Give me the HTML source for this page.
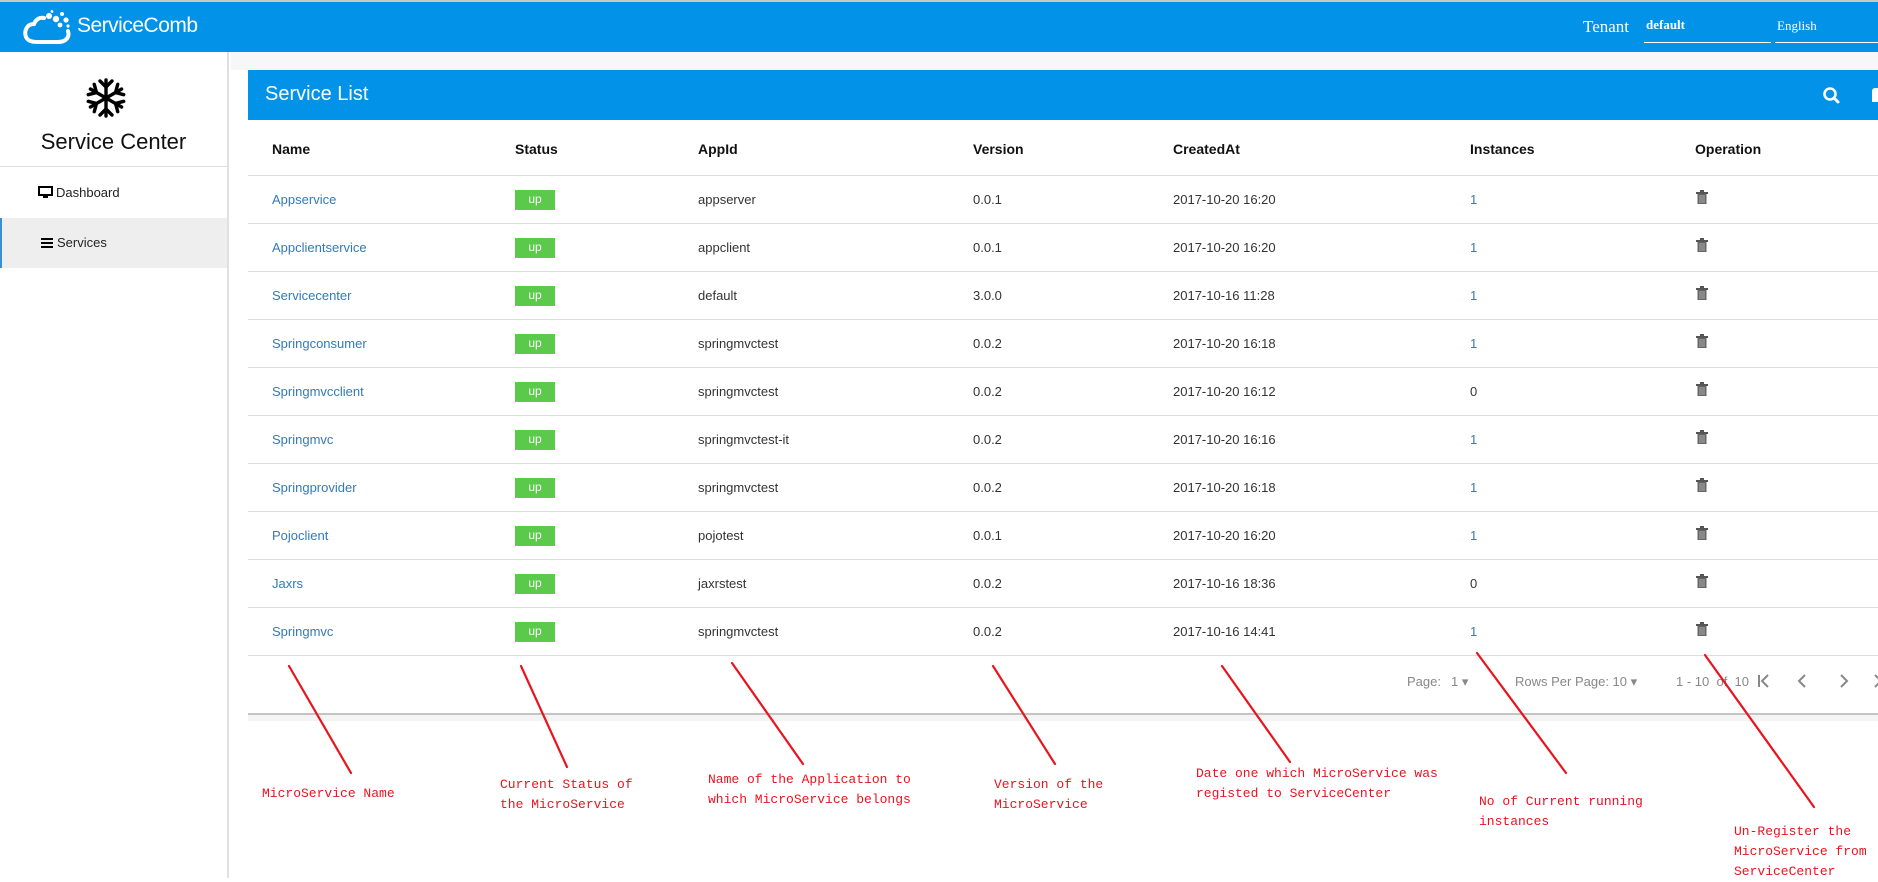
<!DOCTYPE html>
<html><head><meta charset="utf-8"><style>
*{margin:0;padding:0;box-sizing:border-box}
body{width:1878px;height:878px;position:relative;overflow:hidden;background:#fff;font-family:"Liberation Sans",sans-serif;}
.abs{position:absolute}
#top{left:0;top:0;width:1878px;height:52px;background:#0292e8;border-top:2px solid #c8c8c8}
#side{left:0;top:52px;width:229px;height:826px;background:#fff;border-right:2px solid #e0e0e0}
.hd{font-weight:bold;font-size:14px;color:#111;top:141px}
.cell{font-size:13px;color:#333}
.lnk{color:#337ab7}
.badge{background:#5bc94a;color:#fff;font-size:12px;width:40px;height:20px;line-height:19px;text-align:center}
.ann{font-family:"Liberation Mono",monospace;font-size:13px;color:#e8141e;line-height:20px;white-space:pre}
.pg{font-size:13px;color:#888;top:674px}
</style></head><body>
<div id="top" class="abs">
 <svg class="abs" style="left:22px;top:8px" width="52" height="34" viewBox="0 0 52 34"><path d="M12 14 C4 14 2 22 4 27 C6 31 10 32 16 32 L36 32 C44 32 48 27 46 21" fill="none" stroke="#fff" stroke-width="4" stroke-linecap="round"/><path d="M12 14 C14 9 18 7 22 8" fill="none" stroke="#fff" stroke-width="4" stroke-linecap="round"/><circle cx="27" cy="6" r="3" fill="#fff"/><circle cx="34" cy="9" r="3.2" fill="#fff"/><circle cx="40" cy="4" r="2" fill="#fff"/><circle cx="44" cy="10" r="2.6" fill="#fff"/><circle cx="38" cy="15" r="2.4" fill="#fff"/><circle cx="46" cy="16" r="1.6" fill="#fff"/><circle cx="30" cy="1.5" r="1.4" fill="#fff"/></svg>
 <div class="abs" style="left:77px;top:12px;font-size:21px;color:#fff;letter-spacing:-0.5px;font-weight:300">ServiceComb</div>
 <div class="abs" style="left:1583px;top:15px;font-family:'Liberation Serif',serif;font-size:17px;color:#fff">Tenant</div>
 <div class="abs" style="left:1644px;top:15px;width:127px;height:26px;border-bottom:1px solid #fff;font-family:'Liberation Serif',serif;font-size:13px;font-weight:bold;color:#fff;padding-left:2px">default</div>
 <div class="abs" style="left:1775px;top:16px;width:103px;height:25px;border-bottom:1px solid #fff;font-family:'Liberation Serif',serif;font-size:13px;color:#fff;padding-left:2px">English</div>
</div>
<div id="side" class="abs">
 <svg class="abs" style="left:86px;top:26px" width="40" height="40" viewBox="-20 -20 40 40"><g stroke="#000" stroke-width="3.4" fill="none" stroke-linecap="round">
  <g id="arm"><line x1="0" y1="-18" x2="0" y2="18"/><path d="M-6 -17 L0 -11 L6 -17 M-6 17 L0 11 L6 17"/></g>
  <g transform="rotate(60)"><line x1="0" y1="-18" x2="0" y2="18"/><path d="M-6 -17 L0 -11 L6 -17 M-6 17 L0 11 L6 17"/></g>
  <g transform="rotate(120)"><line x1="0" y1="-18" x2="0" y2="18"/><path d="M-6 -17 L0 -11 L6 -17 M-6 17 L0 11 L6 17"/></g></g></svg>
 <div class="abs" style="left:0;width:227px;text-align:center;top:77px;font-size:22px;color:#111">Service Center</div>
 <div class="abs" style="left:0;top:114px;width:227px;height:1px;background:#ddd"></div>
 <svg class="abs" style="left:38px;top:134px" width="15" height="13" viewBox="0 0 15 13"><rect x="1" y="1" width="13" height="8" fill="none" stroke="#000" stroke-width="2"/><rect x="5" y="10" width="5" height="2" fill="#000"/></svg>
 <div class="abs" style="left:56px;top:133px;font-size:13px;color:#222">Dashboard</div>
 <div class="abs" style="left:0;top:166px;width:227px;height:50px;background:#eee;border-left:2px solid #3a8fd0"></div>
 <svg class="abs" style="left:41px;top:186px" width="12" height="10" viewBox="0 0 12 10"><rect y="0" width="12" height="2" fill="#000"/><rect y="4" width="12" height="2" fill="#000"/><rect y="8" width="12" height="2" fill="#000"/></svg>
 <div class="abs" style="left:57px;top:183px;font-size:13px;color:#222">Services</div>
</div>
<div class="abs" style="left:231px;top:52px;width:1647px;height:18px;background:#f7f7f7"></div>
<div class="abs" style="left:248px;top:70px;width:1630px;height:50px;background:#0292e8"></div>
<div class="abs" style="left:265px;top:83px;font-size:20px;color:#fff">Service List</div>
<svg class="abs" style="left:1822px;top:86px" width="20" height="20" viewBox="0 0 20 20"><circle cx="8" cy="8" r="5.5" fill="none" stroke="#fff" stroke-width="2.6"/><path d="M12 12 L16 16" stroke="#fff" stroke-width="3" stroke-linecap="round"/></svg>
<div class="abs" style="left:1872px;top:88px;width:6px;height:14px;background:#fff;border-radius:3px 0 0 0"></div>
<div class="abs hd" style="left:272px">Name</div>
<div class="abs hd" style="left:515px">Status</div>
<div class="abs hd" style="left:698px">AppId</div>
<div class="abs hd" style="left:973px">Version</div>
<div class="abs hd" style="left:1173px">CreatedAt</div>
<div class="abs hd" style="left:1470px">Instances</div>
<div class="abs hd" style="left:1695px">Operation</div>
<div id="rows"></div>
<script>
var d=[["Appservice","appserver","0.0.1","2017-10-20 16:20","1"],["Appclientservice","appclient","0.0.1","2017-10-20 16:20","1"],["Servicecenter","default","3.0.0","2017-10-16 11:28","1"],["Springconsumer","springmvctest","0.0.2","2017-10-20 16:18","1"],["Springmvcclient","springmvctest","0.0.2","2017-10-20 16:12","0"],["Springmvc","springmvctest-it","0.0.2","2017-10-20 16:16","1"],["Springprovider","springmvctest","0.0.2","2017-10-20 16:18","1"],["Pojoclient","pojotest","0.0.1","2017-10-20 16:20","1"],["Jaxrs","jaxrstest","0.0.2","2017-10-16 18:36","0"],["Springmvc","springmvctest","0.0.2","2017-10-16 14:41","1"]];
var h="";
for(var i=0;i<10;i++){var y=176+i*48,r=d[i],t=y+16;
h+='<div class="abs" style="left:248px;top:'+(y-1)+'px;width:1630px;height:1px;background:#ddd"></div>';
h+='<div class="abs cell lnk" style="left:272px;top:'+t+'px">'+r[0]+'</div>';
h+='<div class="abs badge" style="left:515px;top:'+(y+14)+'px">up</div>';
h+='<div class="abs cell" style="left:698px;top:'+t+'px">'+r[1]+'</div>';
h+='<div class="abs cell" style="left:973px;top:'+t+'px">'+r[2]+'</div>';
h+='<div class="abs cell" style="left:1173px;top:'+t+'px">'+r[3]+'</div>';
h+='<div class="abs cell'+(r[4]=="1"?' lnk':'')+'" style="left:1470px;top:'+t+'px">'+r[4]+'</div>';
h+='<svg class="abs" style="left:1696px;top:'+(y+14)+'px" width="12" height="14" viewBox="0 0 12 14"><rect x="0" y="2" width="12" height="2" fill="#555"/><rect x="4" y="0" width="4" height="2" fill="#555"/><rect x="1.5" y="4" width="9" height="10" fill="#666"/><path d="M4 5v8M6 5v8M8 5v8" stroke="#bbb" stroke-width="0.8"/></svg>';}
h+='<div class="abs" style="left:248px;top:655px;width:1630px;height:1px;background:#ddd"></div>';
document.getElementById("rows").innerHTML=h;
</script>
<div class="abs pg" style="left:1407px">Page:</div>
<div class="abs pg" style="left:1451px">1 ▾</div>
<div class="abs pg" style="left:1515px">Rows Per Page: 10 ▾</div>
<div class="abs pg" style="left:1676px">1 - 10 &nbsp;of &nbsp;10</div>
<svg class="abs" style="left:1755px;top:673px" width="123" height="16" viewBox="0 0 123 16"><g stroke="#888" stroke-width="2" fill="none"><path d="M4 2v12M13 2l-6 6 6 6"/><path d="M50 2l-6 6 6 6"/><path d="M86 2l6 6-6 6"/><path d="M120 2l6 6-6 6"/></g></svg>
<div class="abs" style="left:248px;top:713px;width:1630px;height:2px;background:#c4c4c4"></div>
<div class="abs" style="left:248px;top:715px;width:1630px;height:6px;background:#f4f4f4"></div>
<svg class="abs" style="left:0;top:0" width="1878" height="878"><g stroke="#e8141e" stroke-width="2.2" stroke-linecap="round">
<line x1="289" y1="666" x2="351" y2="773"/><line x1="521" y1="666" x2="567" y2="767"/><line x1="732" y1="663" x2="803" y2="764"/><line x1="993" y1="666" x2="1055" y2="764"/><line x1="1222" y1="666" x2="1290" y2="762"/><line x1="1477" y1="653" x2="1566" y2="773"/><line x1="1705" y1="655" x2="1814" y2="807"/></g></svg>
<div class="abs ann" style="left:262px;top:784px">MicroService Name</div>
<div class="abs ann" style="left:500px;top:775px">Current Status of
the MicroService</div>
<div class="abs ann" style="left:708px;top:770px">Name of the Application to
which MicroService belongs</div>
<div class="abs ann" style="left:994px;top:775px">Version of the
MicroService</div>
<div class="abs ann" style="left:1196px;top:764px">Date one which MicroService was
registed to ServiceCenter</div>
<div class="abs ann" style="left:1479px;top:792px">No of Current running
instances</div>
<div class="abs ann" style="left:1734px;top:822px">Un-Register the
MicroService from
ServiceCenter</div>
</body></html>
